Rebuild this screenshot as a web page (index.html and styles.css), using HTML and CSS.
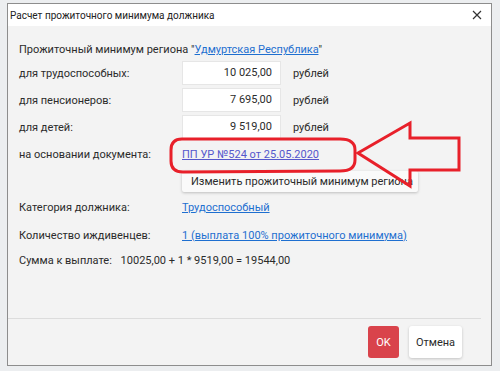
FILE: index.html
```html
<!DOCTYPE html>
<html lang="ru">
<head>
  <meta charset="UTF-8" />
  <title>Расчет прожиточного минимума должника</title>
  <link rel="stylesheet" href="styles.css">
</head>
<body>
  <div class="dialog">
    <div class="titlebar">
      <span class="title">Расчет прожиточного минимума должника</span>
      <svg class="close" width="10" height="10" viewBox="0 0 10 10">
        <path d="M1 1 L9 9 M9 1 L1 9" stroke="#333" stroke-width="1.2" fill="none" />
      </svg>
    </div>
    <div class="content">
      <div class="intro">Прожиточный минимум региона "<a href="#">Удмуртская Республика</a>"</div>
      <div class="form">
        <div class="label">для трудоспособных:</div>
        <div class="value"><span class="input">10 025,00</span><span class="unit">рублей</span></div>

        <div class="label">для пенсионеров:</div>
        <div class="value"><span class="input">7 695,00</span><span class="unit">рублей</span></div>

        <div class="label">для детей:</div>
        <div class="value"><span class="input">9 519,00</span><span class="unit">рублей</span></div>

        <div class="label">на основании документа:</div>
        <div class="value"><a href="#" class="doc">ПП УР №524 от 25.05.2020</a></div>

        <div class="value btn-row"><button class="change">Изменить прожиточный минимум региона</button></div>

        <div class="label">Категория должника:</div>
        <div class="value"><a href="#">Трудоспособный</a></div>

        <div class="label">Количество иждивенцев:</div>
        <div class="value"><a href="#">1 (выплата 100% прожиточного минимума)</a></div>

        <div class="sum">Сумма к выплате: <span class="formula">10025,00 + 1 * 9519,00 = 19544,00</span></div>
      </div>
    </div>
    <div class="footer">
      <button class="ok">OK</button>
      <button class="cancel">Отмена</button>
    </div>
  </div>

  <svg class="markup" width="500" height="371" viewBox="0 0 500 371">
    <path d="M182 139 L340 139 Q355 139 355 150 L355 160 Q355 171 340 171 L183 172 Q171 172 171 161 L171 150 Q171 139 182 139 Z"
          fill="none" stroke="#e8202a" stroke-width="3" />
    <polygon points="358,153 410,123 410,138 459,138 459,170 410,170 410,186"
             fill="none" stroke="#e8202a" stroke-width="3" stroke-linejoin="miter" />
  </svg>
</body>
</html>
```

FILE: styles.css
```css
body {
  margin: 0;
  width: 500px;
  height: 371px;
  background-color: #eceef0;
  font-family: Roboto, 'Noto Sans', sans-serif;
  font-size: 11px;
  color: #2b2b2b;
  position: relative;
  overflow: hidden;
}
.dialog {
  margin: 3px 0 0 7px;
  width: 483px;
  height: 361px;
  border: 1px solid #8d8d8d;
  background-color: #f3f3f3;
  display: flex;
  flex-direction: column;
}
.titlebar {
  height: 22px;
  background-color: #fff;
  display: flex;
  align-items: center;
  justify-content: space-between;
  padding: 0 9px 0 2px;
}
.title {
  font-size: 10px;
  color: #222;
}
.content {
  padding: 14px 0 0 11px;
}
.intro {
  height: 20px;
  line-height: 20px;
  margin-bottom: 1px;
}
a {
  color: #1e6fd0;
  text-decoration: underline;
}
a.doc {
  color: #5557cc;
}
.form {
  display: grid;
  grid-template-columns: 163px 1fr;
  grid-auto-rows: 24px;
  row-gap: 3px;
  align-items: center;
}
.value {
  display: flex;
  align-items: center;
}
.input {
  width: 89px;
  height: 22px;
  line-height: 22px;
  padding-right: 8px;
  background-color: #fff;
  border: 1px solid #e6e6e6;
  text-align: right;
}
.unit {
  margin-left: 12px;
}
.btn-row {
  grid-column: 2;
  align-self: start;
  margin-top: 2px;
}
.change {
  width: 236px;
  height: 21px;
  padding: 0 0 0 9px;
  text-align: left;
  white-space: nowrap;
  overflow: hidden;
  font-family: inherit;
  font-size: 11px;
  color: #2b2b2b;
  background-color: #fafafa;
  border: none;
  border-radius: 2px;
  box-shadow: 0 1px 3px rgba(0, 0, 0, 0.22);
}
.btn-row + .label,
.btn-row + .label + .value {
  margin-top: -2px;
}
.sum {
  grid-column: 1 / span 2;
  margin-top: -3px;
}
.formula {
  margin-left: 6px;
}
.footer {
  margin: auto 10px 0 0;
  border-top: 1px solid #dcdcdc;
  padding: 7px 19px 7px 0;
  display: flex;
  justify-content: flex-end;
  gap: 10px;
}
.footer button {
  height: 32px;
  border: none;
  border-radius: 3px;
  font-family: inherit;
  font-size: 11px;
}
.ok {
  width: 31px;
  padding: 0;
  background-color: #d9434b;
  color: #fff;
}
.cancel {
  width: 53px;
  padding: 0;
  background-color: #fff;
  color: #2b2b2b;
  box-shadow: 0 1px 3px rgba(0, 0, 0, 0.2);
}
.markup {
  position: absolute;
  left: 0;
  top: 0;
  pointer-events: none;
}
```
